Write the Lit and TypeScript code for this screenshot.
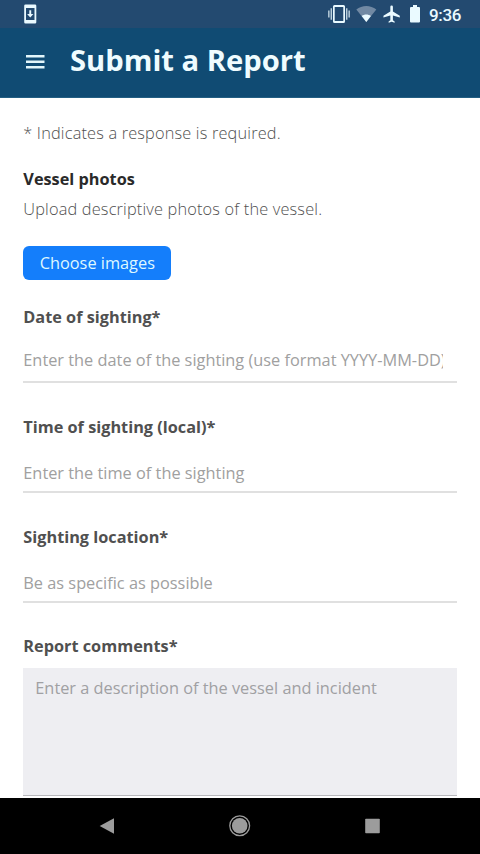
import { LitElement, html, css, svg } from "lit";
import { customElement, property } from "lit/decorators.js";

@customElement("status-bar")
class StatusBar extends LitElement {
  static styles = css`
    :host { display: flex; height: 28px; background: #234a70; color: #eafaff; }
    svg { display: block; width: 480px; height: 28px; }
    .time { font: 500 17px Roboto, sans-serif; }
  `;
  render() {
    return html`<svg viewBox="0 0 480 28" fill="#eafaff">
      ${svg`
      <path fill-rule="evenodd" d="M25.500 4.500h9.500a1.300 1.300 0 0 1 1.300 1.300v16.400a1.300 1.300 0 0 1-1.300 1.300h-9.500a1.300 1.300 0 0 1-1.300-1.300V5.800a1.300 1.300 0 0 1 1.300-1.300zM26 8v12h8.500V8z"/>
      <path d="M29.300 10.300h1.900v3.700h2.200l-3.150 3.500-3.150-3.500h2.200z"/>
      <path fill-rule="evenodd" d="M334.500 5h9a1.500 1.500 0 0 1 1.500 1.500v15a1.500 1.500 0 0 1-1.500 1.500h-9a1.500 1.500 0 0 1-1.500-1.500v-15a1.500 1.500 0 0 1 1.500-1.500zM334.700 7v14h8.600V7z"/>
      <path d="M330.600 8.300h1.300v11.400h-1.300zM328.200 10.500h1.300v7h-1.300zM346.100 8.300h1.300v11.400h-1.300zM348.500 10.500h1.300v7h-1.300z" opacity=".85"/>
      <path fill="#7189a3" d="M356.300 9.600c5.700-4.800 14.300-4.800 20 0l-10 12.400z"/>
      <path d="M361.700 15.900c2.700-2 6.500-2 9.200 0l-4.600 6z"/>
      <path transform="translate(381.300 3.800) scale(.86)" d="M21.500 16v-2l-8-5V3.500a1.500 1.500 0 0 0-3 0V9l-8 5v2l8-2.500V19l-2 1.500V22l3.500-1 3.500 1v-1.500L13.500 19v-5.500z"/>
      <path d="M413 5h4v2h2a1 1 0 0 1 1 1v13.500a1 1 0 0 1-1 1h-8a1 1 0 0 1-1-1V8a1 1 0 0 1 1-1h2z"/>
      <text class="time" x="429" y="20.500" textLength="32.500">9:36</text>`}
    </svg>`;
  }
}

@customElement("form-field")
class FormField extends LitElement {
  @property() label = "";
  @property() hint = "";
  static styles = css`
    :host { display: flex; flex-direction: column; height: 110px; }
    .label { font-weight: 700; font-size: 16.300px; color: #505050; line-height: 24px; }
    input { box-sizing: border-box; width: 100%; height: 24px; margin: 22px 0 0; padding: 0 14px 0 0;
      border: 0; background: none; font: inherit; letter-spacing: inherit; line-height: 24px; outline: 0; }
    input::placeholder { color: #a0a0a0; opacity: 1; }
    .rule { margin-top: 6px; height: 2px; background: #e0e0e0; flex: none; }
    :host([first]) input { margin-top: 19px; }
    :host([first]) .rule { margin-top: 9px; }
  `;
  render() {
    return html`<label class="label">${this.label}</label><input placeholder=${this.hint} /><div class="rule"></div>`;
  }
}

@customElement("app-root")
class AppRoot extends LitElement {
  static styles = css`
    :host { display: flex; flex-direction: column; width: 480px; height: 854px; overflow: hidden;
      background: #fff; font: 16.340px/24px "Open Sans", sans-serif; }
    header { box-sizing: border-box; display: flex; align-items: center; height: 70px; padding: 0 25.500px 5px;
      background: #104b73; color: #effcff; border-bottom: 1px solid #245f83; flex: none; }
    .menu { width: 19px; height: 14px; margin-right: 25.500px; display: block; margin-top: 4px; }
    h1 { margin: 0; font-size: 29.200px; line-height: 40px; font-weight: 700; }
    main { flex: 1; min-height: 0; overflow: hidden; padding: 23px 23px 0 23.300px; }
    p { margin: 0; font-weight: 300; color: #505050; white-space: nowrap; letter-spacing: .17px; }
    h2 { margin: 22px 0 6px; font-size: 16.300px; line-height: 24px; font-weight: 700; color: #2a2a2a; }
    .choose { display: block; box-sizing: border-box; margin: 25.300px 0 25.700px; width: 148px; height: 33.500px; padding: 0;
      border: 0; border-radius: 6px; background: #147efb; color: #dff8ff; font: inherit; line-height: 32px; }
    .comment { display: block; margin-top: -1px; font-weight: 700; font-size: 16.300px; color: #505050; }
    textarea { display: block; box-sizing: border-box; width: 434px; height: 128px; margin-top: 9.300px; padding: 8px 12px;
      border: 0; border-bottom: 1px solid #b8b8bc; background: #eeeef2; font: inherit; resize: none; outline: 0; }
    textarea::placeholder { color: #a0a0a3; opacity: 1; }
    nav { height: 56px; background: #000; flex: none; }
    nav svg { display: block; }
  `;
  render() {
    return html`
      <status-bar></status-bar>
      <header>
        <svg class="menu" viewBox="0 0 19 14" fill="#e2f6fb"><path d="M0 0h18.500v2.500H0zM0 5.500h18.500v2.500H0zM0 11h18.500v2.500H0z"/></svg>
        <h1>Submit a Report</h1>
      </header>
      <main>
        <p>* Indicates a response is required.</p>
        <h2>Vessel photos</h2>
        <p>Upload descriptive photos of the vessel.</p>
        <button class="choose">Choose images</button>
        <form-field first label="Date of sighting*" hint="Enter the date of the sighting (use format YYYY-MM-DD)"></form-field>
        <form-field label="Time of sighting (local)*" hint="Enter the time of the sighting"></form-field>
        <form-field label="Sighting location*" hint="Be as specific as possible"></form-field>
        <label class="comment">Report comments*</label>
        <textarea placeholder="Enter a description of the vessel and incident"></textarea>
      </main>
      <nav>
        <svg width="480" height="56" viewBox="0 0 480 56" fill="#9c9c9c">
          <path d="M99.700 28 114 20.300v15.400z"/>
          <circle cx="239.700" cy="27.700" r="7.800"/>
          <circle cx="239.700" cy="27.700" r="9.900" fill="none" stroke="#9c9c9c" stroke-width="1.300"/>
          <rect x="365.200" y="20.700" width="14.600" height="14.600" rx=".8"/>
        </svg>
      </nav>`;
  }
}
